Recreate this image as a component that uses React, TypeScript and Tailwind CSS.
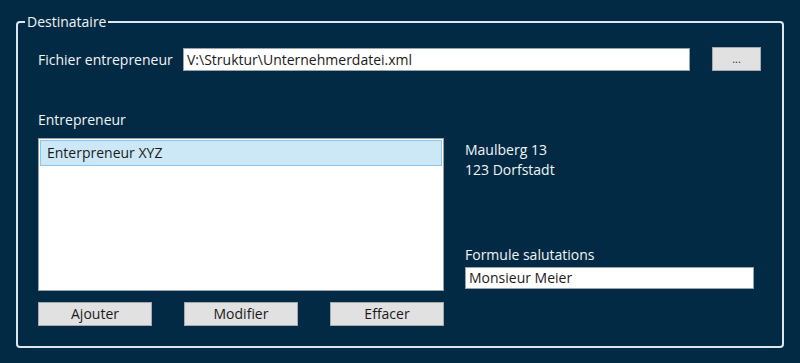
export default function App() {
  return (
    <div className="w-[800px] h-[363px] bg-[#032a44] pt-[10px] px-[16px] font-['Open_Sans',sans-serif] text-[14px] text-[#f2f4f6] overflow-hidden">
      <fieldset className="w-[768px] h-[338px] border-2 border-[#dde6ee] rounded-[4px]">
        <legend className="ml-[7px] px-[2px] leading-[24px]">Destinataire</legend>

        <div className="px-[20px] pt-[13px]">
          {/* Fichier */}
          <div className="flex items-center h-[24px]">
            <span className="w-[145px]">Fichier entrepreneur</span>
            <div className="w-[507px] h-[23px] bg-white border border-[#9aa3ab] text-[#1a1a1a] px-[3px] leading-[21px]">
              V:\Struktur\Unternehmerdatei.xml
            </div>
            <button className="ml-[22px] w-[49px] h-[24px] bg-[#e1e1e1] border border-[#a9a9a9] text-[#333] text-[11px] leading-[18px]">
              ...
            </button>
          </div>

          <div className="mt-[39px] leading-[20px]">Entrepreneur</div>

          <div className="flex mt-[8px]">
            <div className="w-[406px]">
              <div className="h-[153px] bg-white border border-[#9aa3ab] p-px">
                <div className="h-[26px] bg-[#cce8f6] border border-[#8cc6ea] text-[#1a1a1a] px-[6px] leading-[24px]">
                  Enterpreneur XYZ
                </div>
              </div>
              <div className="flex justify-between mt-[11px]">
                <button className="w-[114px] h-[24px] bg-[#e1e1e1] border border-[#a9a9a9] text-[#1a1a1a] leading-[22px]">Ajouter</button>
                <button className="w-[114px] h-[24px] bg-[#e1e1e1] border border-[#a9a9a9] text-[#1a1a1a] leading-[22px]">Modifier</button>
                <button className="w-[114px] h-[24px] bg-[#e1e1e1] border border-[#a9a9a9] text-[#1a1a1a] leading-[22px]">Effacer</button>
              </div>
            </div>

            <div className="ml-[21px] flex flex-col">
              <div className="mt-[2px] leading-[20px]">
                <div>Maulberg 13</div>
                <div>123 Dorfstadt</div>
              </div>
              <div className="mt-[65px] leading-[20px]">Formule salutations</div>
              <div className="mt-[2px] w-[289px] h-[22px] bg-white border border-[#9aa3ab] text-[#1a1a1a] px-[3px] leading-[20px]">
                Monsieur Meier
              </div>
            </div>
          </div>
        </div>
      </fieldset>
    </div>
  )
}
